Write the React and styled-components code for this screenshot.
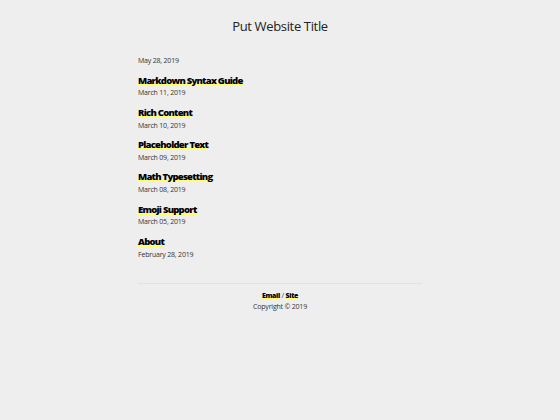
import React from "react";
import styled, { createGlobalStyle } from "styled-components";

const Global = createGlobalStyle`
  html, body { margin: 0; padding: 0; background: #eeeeee; }
  body { font-family: "Open Sans", "Liberation Sans", sans-serif; color: #222; }
`;

const Page = styled.div`
  width: 284px;
  margin: 0 auto;
  padding-top: 16px;
`;

const Title = styled.h1`
  margin: 0;
  text-align: center;
  font-size: 13px;
  font-weight: 400;
  letter-spacing: -0.35px;
  color: #222;
  line-height: 20px;
`;

const List = styled.div`
  margin-top: 20px;
  display: flex;
  flex-direction: column;
  gap: 8.5px;
`;

const Post = styled.div`
  display: flex;
  flex-direction: column;
  align-items: flex-start;
`;

const Link = styled.a`
  font-size: 9.5px;
  font-weight: 800;
  letter-spacing: -0.75px;
  color: #000;
  text-decoration: none;
  line-height: 12px;
  background: linear-gradient(transparent 74%, #ffff66 74%, #ffff66 94%, transparent 94%);
`;

const Date = styled.div`
  font-size: 7px;
  letter-spacing: -0.2px;
  color: #333;
  line-height: 10px;
  margin-top: ${(p) => (p.$first ? "0" : "1.8px")};
`;

const Rule = styled.hr`
  border: 0;
  border-top: 1px solid #e2e2e2;
  margin: 23px 0 6.5px;
`;

const Footer = styled.footer`
  text-align: center;
  font-size: 7px;
  letter-spacing: -0.2px;
  color: #333;
  line-height: 11px;
`;

const FootLinks = styled.div`
  color: #333;
`;

const FootLink = styled(Link)`
  font-size: 7px;
  letter-spacing: -0.35px;
  line-height: 11px;
`;

const posts = [
  ["Markdown Syntax Guide", "March 11, 2019"],
  ["Rich Content", "March 10, 2019"],
  ["Placeholder Text", "March 09, 2019"],
  ["Math Typesetting", "March 08, 2019"],
  ["Emoji Support", "March 05, 2019"],
  ["About", "February 28, 2019"],
];

export default function App() {
  return (
    <>
      <Global />
      <Page>
        <Title>Put Website Title</Title>
        <List>
          <Date $first>May 28, 2019</Date>
          {posts.map(([t, d]) => (
            <Post key={t}>
              <Link href="#">{t}</Link>
              <Date>{d}</Date>
            </Post>
          ))}
        </List>
        <Rule />
        <Footer>
          <FootLinks>
            <FootLink href="#">Email</FootLink> / <FootLink href="#">Site</FootLink>
          </FootLinks>
          <div>Copyright © 2019</div>
        </Footer>
      </Page>
    </>
  );
}
